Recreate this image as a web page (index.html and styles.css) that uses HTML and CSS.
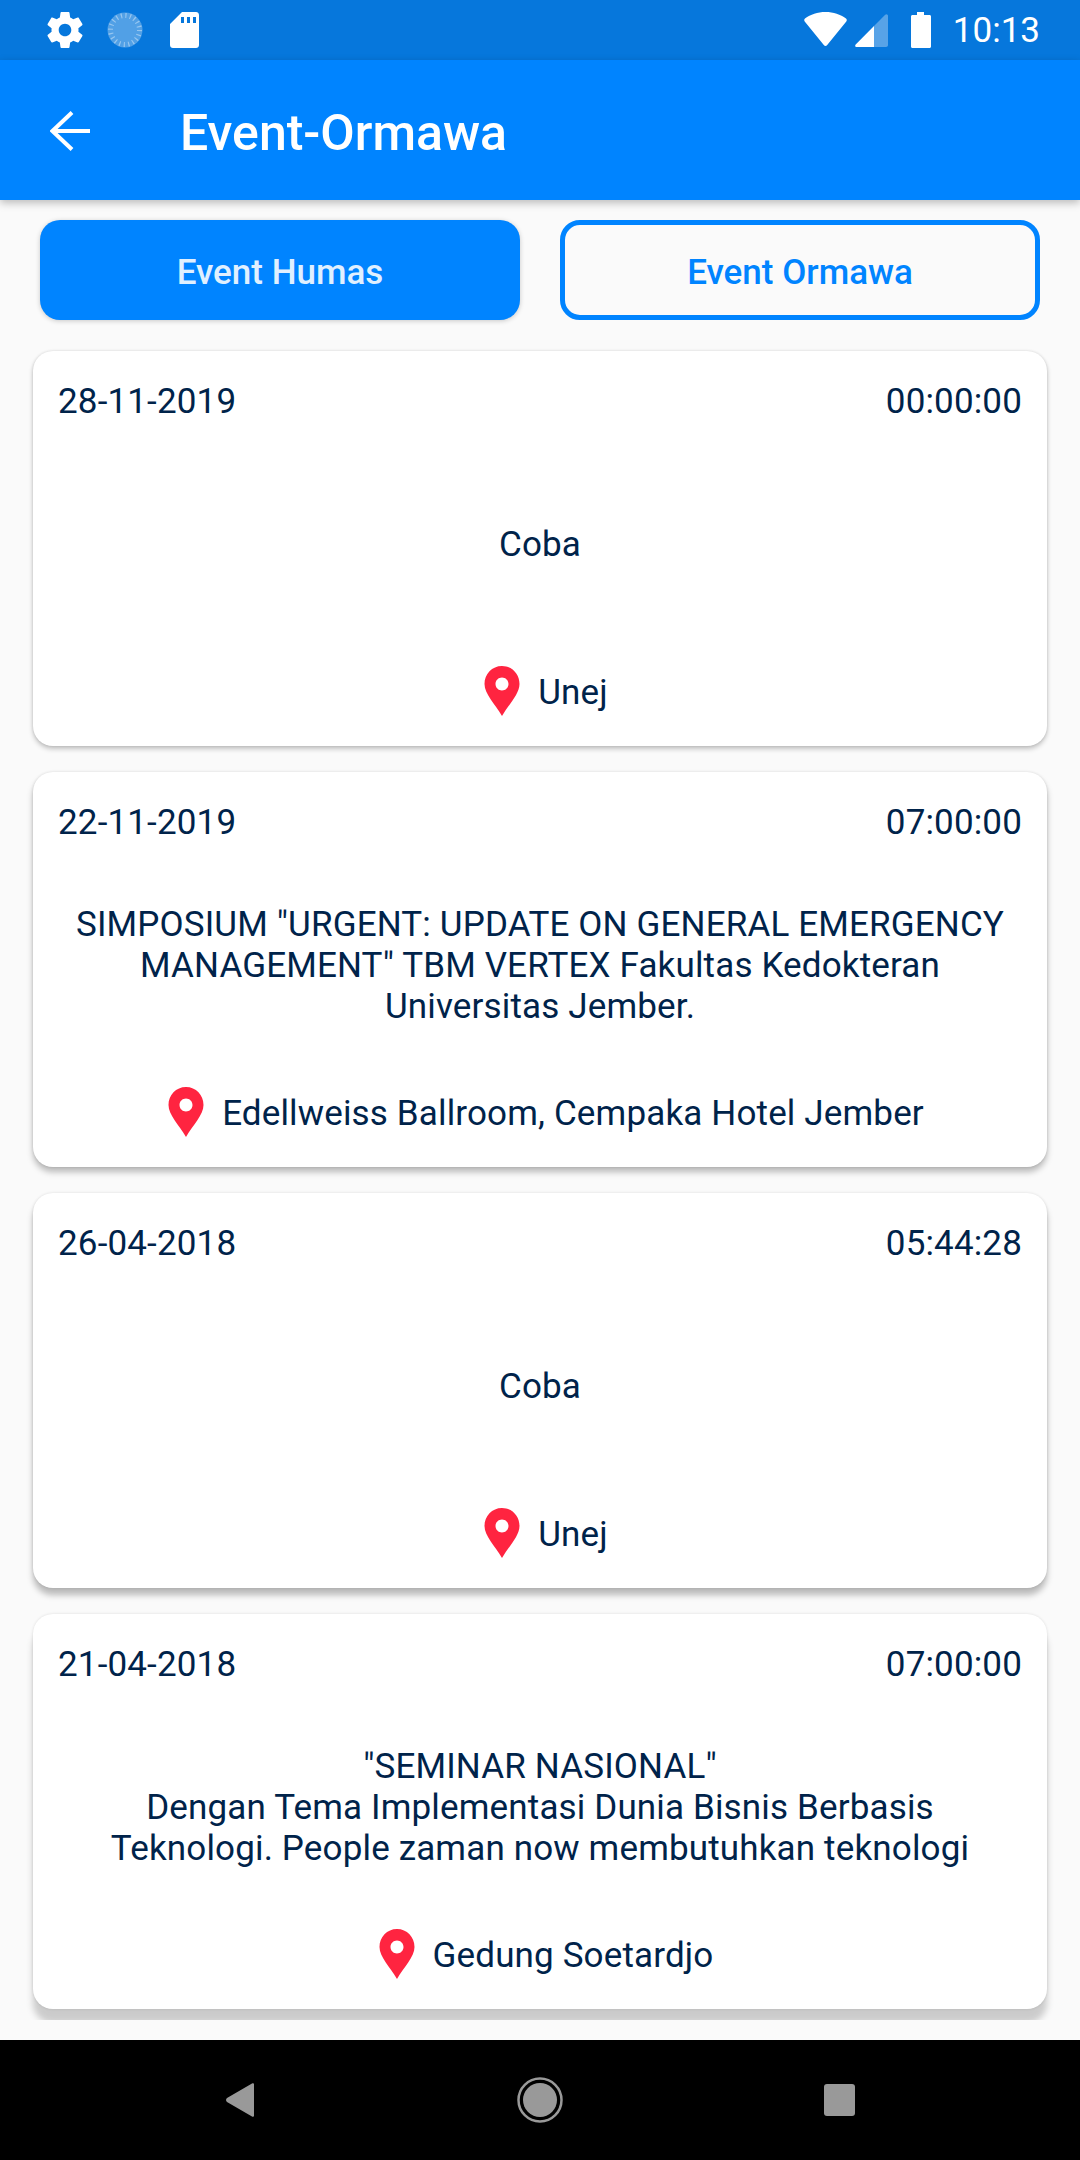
FILE: index.html
```html
<!DOCTYPE html>
<html lang="en">

<head>
    <meta charset="UTF-8">
    <meta name="viewport" content="width=device-width, initial-scale=1.0">
    <title>Event-Ormawa</title>
    <link rel="stylesheet" href="styles.css">
</head>

<body>
    <svg class="defs" width="0" height="0">
        <symbol id="pin" viewBox="0 0 36 50">
            <path fill-rule="evenodd" d="M18 0C8 0 .5 8 .5 18C.5 28 11 38 18 50C25 38 35.500 28 35.500 18C35.500 8 28 0 18 0ZM18 11.500C21.600 11.500 24.500 14.400 24.500 18C24.500 21.600 21.600 24.500 18 24.500C14.400 24.500 11.500 21.600 11.500 18C11.500 14.400 14.400 11.500 18 11.500Z" />
        </symbol>
    </svg>

    <div class="statusbar">
        <div class="status-left">
            <svg class="ic-gear" viewBox="2.6 2 18.800 20">
                <path fill="#fff" d="M19.430 12.980c.04-.32.07-.64.07-.98s-.03-.66-.07-.98l2.110-1.650c.19-.15.24-.42.12-.64l-2-3.460c-.12-.22-.39-.3-.61-.22l-2.490 1c-.52-.4-1.080-.73-1.690-.98l-.38-2.650C14.460 2.180 14.250 2 14 2h-4c-.25 0-.46.18-.49.42l-.38 2.650c-.61.25-1.170.59-1.690.98l-2.490-1c-.23-.09-.49 0-.61.22l-2 3.460c-.13.22-.07.49.12.64l2.110 1.650c-.04.32-.07.65-.07.98s.03.66.07.98l-2.110 1.650c-.19.15-.24.42-.12.64l2 3.460c.12.22.39.3.61.22l2.490-1c.52.4 1.080.73 1.690.98l.38 2.650c.03.24.24.42.49.42h4c.25 0 .46-.18.49-.42l.38-2.650c.61-.25 1.170-.59 1.690-.98l2.490 1c.23.09.49 0 .61-.22l2-3.460c.12-.22.07-.49-.12-.64l-2.110-1.650zM12 15.500c-1.930 0-3.500-1.570-3.500-3.500s1.570-3.500 3.500-3.500 3.500 1.570 3.500 3.500-1.570 3.500-3.500 3.500z" />
            </svg>
            <svg class="ic-spinner" viewBox="0 0 36 36">
                <circle cx="18" cy="18" r="17.500" fill="#fff" opacity=".3" />
                <circle cx="18" cy="18" r="14.500" fill="none" stroke="#fff" stroke-width="5" stroke-dasharray="1.200 3.350" opacity=".4" />
                <path d="M31 5.500A17.500 17.500 0 0 1 8 32.500A16.500 16.500 0 0 0 31 5.500Z" fill="#fff" opacity=".85" />
            </svg>
            <svg class="ic-sd" viewBox="0 0 29 36">
                <path fill="#fff" fill-rule="evenodd" d="M12 0H26C27.700 0 29 1.300 29 3V33C29 34.700 27.700 36 26 36H3C1.300 36 0 34.700 0 33V12ZM11 5V11H14V5ZM17 5V11H20V5ZM23 5V11H26V5Z" />
            </svg>
        </div>
        <div class="status-right">
            <svg class="ic-wifi" viewBox="0 0 43 34">
                <path fill="#fff" d="M21.500 0C13.500 0 6.500 2.500 1 6.500C0 7.300 0 8.500.7 9.500L19.800 33C20.700 34.200 22.300 34.200 23.200 33L42.300 9.500C43 8.500 43 7.300 42 6.500C36.500 2.500 29.500 0 21.500 0Z" />
            </svg>
            <svg class="ic-signal" viewBox="0 0 33 33">
                <path fill="#fff" opacity=".33" d="M33 2C33 .5 31.500-.5 30.200.7L19 12V33H31C32.200 33 33 32.200 33 31Z" />
                <path fill="#fff" d="M19 12L.7 30.500C-.3 31.500.3 33 1.500 33H19Z" />
            </svg>
            <svg class="ic-battery" viewBox="0 0 20 36">
                <path fill="#fff" d="M6 0H13V3H18.500C19.400 3 20 3.600 20 4.500V34.500C20 35.400 19.400 36 18.500 36H1.500C.6 36 0 35.400 0 34.500V4.500C0 3.600.6 3 1.500 3H6Z" />
            </svg>
            <span class="clock">10:13</span>
        </div>
    </div>

    <div class="appbar">
        <svg class="back" viewBox="0 0 40 40">
            <path d="M40 20H2M22 1.500L2.500 20L22 38.500" fill="none" stroke="#fff" stroke-width="4" />
        </svg>
        <div class="appbar-title">Event-Ormawa</div>
    </div>

    <div class="content">
        <div class="tabs">
            <div class="tab tab-on">Event Humas</div>
            <div class="tab tab-off">Event Ormawa</div>
        </div>

        <div class="list">
            <div class="card shadow1">
                <div class="card-head"><span>28-11-2019</span><span>00:00:00</span></div>
                <div class="card-title">Coba</div>
                <div class="card-place"><svg class="pin"><use href="#pin" /></svg><span>Unej</span></div>
            </div>
            <div class="card shadow2">
                <div class="card-head"><span>22-11-2019</span><span>07:00:00</span></div>
                <div class="card-title">SIMPOSIUM "URGENT: UPDATE ON GENERAL EMERGENCY MANAGEMENT" TBM VERTEX Fakultas Kedokteran Universitas Jember.</div>
                <div class="card-place"><svg class="pin"><use href="#pin" /></svg><span>Edellweiss Ballroom, Cempaka Hotel Jember</span></div>
            </div>
            <div class="card shadow3">
                <div class="card-head"><span>26-04-2018</span><span>05:44:28</span></div>
                <div class="card-title">Coba</div>
                <div class="card-place"><svg class="pin"><use href="#pin" /></svg><span>Unej</span></div>
            </div>
            <div class="card shadow4">
                <div class="card-head"><span>21-04-2018</span><span>07:00:00</span></div>
                <div class="card-title">"SEMINAR NASIONAL"<br>Dengan Tema Implementasi Dunia Bisnis Berbasis Teknologi. People zaman now membutuhkan teknologi</div>
                <div class="card-place"><svg class="pin"><use href="#pin" /></svg><span>Gedung Soetardjo</span></div>
            </div>
        </div>
    </div>

    <div class="navbar">
        <svg class="nav-back" viewBox="0 0 28 34">
            <path fill="#999" d="M26 .5C27 -.3 28 .3 28 1.500V32.500C28 33.700 27 34.300 26 33.500L1 19C-.3 18 -.3 16 1 15Z" />
        </svg>
        <svg class="nav-home" viewBox="0 0 46 46">
            <circle cx="23" cy="23" r="21.500" fill="none" stroke="#999" stroke-width="2.500" />
            <circle cx="23" cy="23" r="17" fill="#999" />
        </svg>
        <div class="nav-square"></div>
    </div>
</body>

</html>
```

FILE: styles.css
```css
* {
    box-sizing: border-box;
}

html,
body {
    margin: 0;
    height: 100%;
}

body {
    display: flex;
    flex-direction: column;
    height: 2160px;
    overflow: hidden;
    background: #fafafa;
    font-family: Roboto, "Liberation Sans", sans-serif;
    font-size: 35px;
    color: #00234a;
}

svg {
    display: block;
    flex: none;
}

.defs {
    position: absolute;
}

.statusbar {
    display: flex;
    flex: none;
    justify-content: space-between;
    align-items: center;
    height: 60px;
    padding: 0 40px 0 47px;
    background: #0677dc;
    color: #fff;
}

.status-left,
.status-right {
    display: flex;
    align-items: center;
}

.ic-gear {
    width: 36px;
    height: 36px;
}

.ic-spinner {
    width: 36px;
    height: 36px;
    margin-left: 24px;
}

.ic-sd {
    width: 29px;
    height: 36px;
    margin-left: 27px;
}

.ic-wifi {
    width: 43px;
    height: 34px;
    margin-top: -2px;
}

.ic-signal {
    width: 33px;
    height: 33px;
    margin-left: 8px;
    margin-top: 1px;
}

.ic-battery {
    width: 20px;
    height: 36px;
    margin-left: 23px;
}

.clock {
    margin-left: 22px;
}

.appbar {
    position: relative;
    display: flex;
    flex: none;
    align-items: center;
    height: 140px;
    padding-left: 50px;
    background: #0084ff;
    box-shadow: 0 3px 8px rgba(0, 0, 0, 0.25);
    color: #fff;
}

.back {
    width: 40px;
    height: 40px;
    margin-top: 1px;
}

.appbar-title {
    margin-left: 90px;
    padding-top: 5px;
    font-size: 50px;
    font-weight: 500;
}

.content {
    display: flex;
    flex: none;
    flex-direction: column;
    height: 1820px;
    overflow: hidden;
}

.tabs {
    display: grid;
    grid-template-columns: 1fr 1fr;
    gap: 40px;
    padding: 20px 40px 0;
}

.tab {
    display: flex;
    justify-content: center;
    align-items: center;
    height: 100px;
    padding-top: 4px;
    border-radius: 20px;
    font-weight: 500;
}

.tab-on {
    background: #0084ff;
    color: #e0f0ff;
    box-shadow: 0 1px 5px rgba(0, 0, 0, 0.2);
}

.tab-off {
    border: 5px solid #0084ff;
    color: #0084ff;
}

.list {
    display: flex;
    flex-direction: column;
    gap: 26px;
    padding: 31px 33px 0;
}

.card {
    display: flex;
    flex: none;
    flex-direction: column;
    height: 395px;
    padding: 30px 25px 30px;
    border-radius: 20px;
    background: #fff;
    letter-spacing: 0.15px;
}

.shadow1 {
    box-shadow: 0 3px 5px rgba(0, 0, 0, 0.22), 0 0 3px rgba(0, 0, 0, 0.12);
}

.shadow2 {
    box-shadow: 0 5px 6px rgba(0, 0, 0, 0.26), 0 0 3px rgba(0, 0, 0, 0.12);
}

.shadow3 {
    box-shadow: 0 7px 6px rgba(0, 0, 0, 0.26), 0 0 3px rgba(0, 0, 0, 0.12);
}

.shadow4 {
    box-shadow: 0 14px 7px rgba(0, 0, 0, 0.19), 0 0 3px rgba(0, 0, 0, 0.12);
}

.card-head {
    display: flex;
    justify-content: space-between;
}

.card-title {
    display: flex;
    flex: 1;
    align-items: center;
    padding: 0 15px;
    line-height: 41px;
    text-align: center;
    justify-content: center;
}

.card-place {
    display: flex;
    justify-content: center;
    align-items: center;
    gap: 18px;
    padding-left: 12px;
}

.card-place span {
    padding-top: 2px;
}

.pin {
    width: 36px;
    height: 50px;
    fill: #ff2440;
}

.navbar {
    position: relative;
    flex: none;
    height: 120px;
    margin-top: 20px;
    background: #000;
}

.nav-back {
    position: absolute;
    left: 226px;
    top: 43px;
    width: 28px;
    height: 34px;
}

.nav-home {
    position: absolute;
    left: 517px;
    top: 37px;
    width: 46px;
    height: 46px;
}

.nav-square {
    position: absolute;
    left: 824px;
    top: 44px;
    width: 31px;
    height: 32px;
    border-radius: 3px;
    background: #999;
}
```
